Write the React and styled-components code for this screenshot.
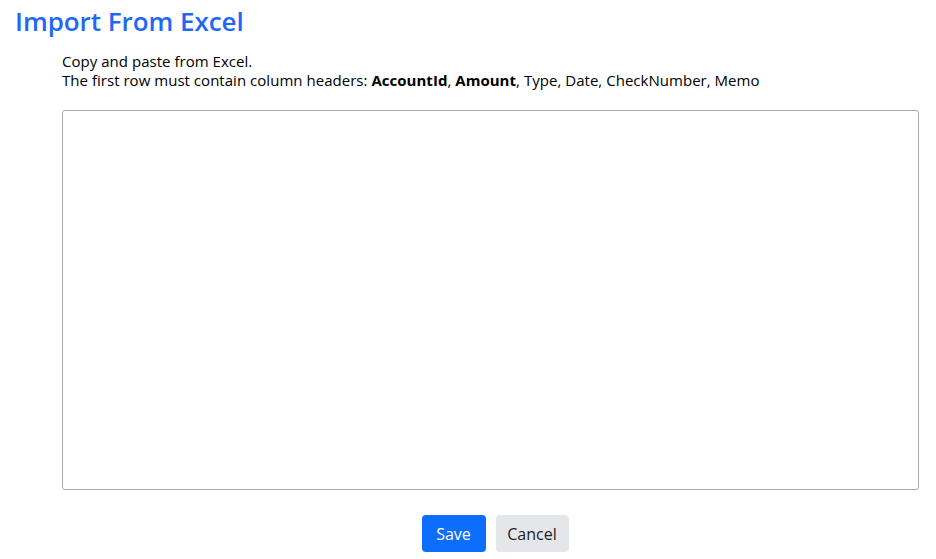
import React from "react";
import styled, { createGlobalStyle } from "styled-components";

const Global = createGlobalStyle`
  html, body { margin: 0; padding: 0; background: #fff; }
  body { font-family: "Open Sans", "Noto Sans", sans-serif; color: #111; }
`;

const Page = styled.div`
  padding: 4px 18px 0 15px;
`;

const Title = styled.h1`
  margin: 0;
  font-size: 26px;
  line-height: 34px;
  font-weight: 600;
  color: #1f68f5;
  letter-spacing: -0.05px;
`;

const Body = styled.div`
  padding-left: 47px;
  padding-top: 14px;
`;

const Intro = styled.p`
  margin: 0;
  font-size: 15px;
  line-height: 19px;
  letter-spacing: 0.03px;
  color: #000;
  b { font-weight: 700; color: #000; }
`;

const Area = styled.textarea`
  display: block;
  box-sizing: border-box;
  width: 857px;
  height: 380px;
  margin-top: 20px;
  border: 1px solid #aaa;
  border-radius: 3px;
  resize: none;
  outline: none;
`;

const Actions = styled.div`
  display: flex;
  justify-content: center;
  gap: 10px;
  margin-top: 25px;
  padding-left: 9px;
  width: 857px;
  box-sizing: border-box;
`;

const Button = styled.button`
  height: 37px;
  width: ${(p) => (p.$primary ? 64 : 73)}px;
  padding: 0;
  border: none;
  border-radius: 4px;
  font-family: inherit;
  font-size: 16px;
  background: ${(p) => (p.$primary ? "#0d6efd" : "#e4e6ea")};
  color: ${(p) => (p.$primary ? "#fff" : "#222")};
  cursor: pointer;
`;

export default function App() {
  return (
    <Page>
      <Global />
      <Title>Import From Excel</Title>
      <Body>
        <Intro>
          Copy and paste from Excel.
          <br />
          The first row must contain column headers: <b>AccountId</b>, <b>Amount</b>, Type, Date, CheckNumber, Memo
        </Intro>
        <Area />
        <Actions>
          <Button $primary>Save</Button>
          <Button>Cancel</Button>
        </Actions>
      </Body>
    </Page>
  );
}
